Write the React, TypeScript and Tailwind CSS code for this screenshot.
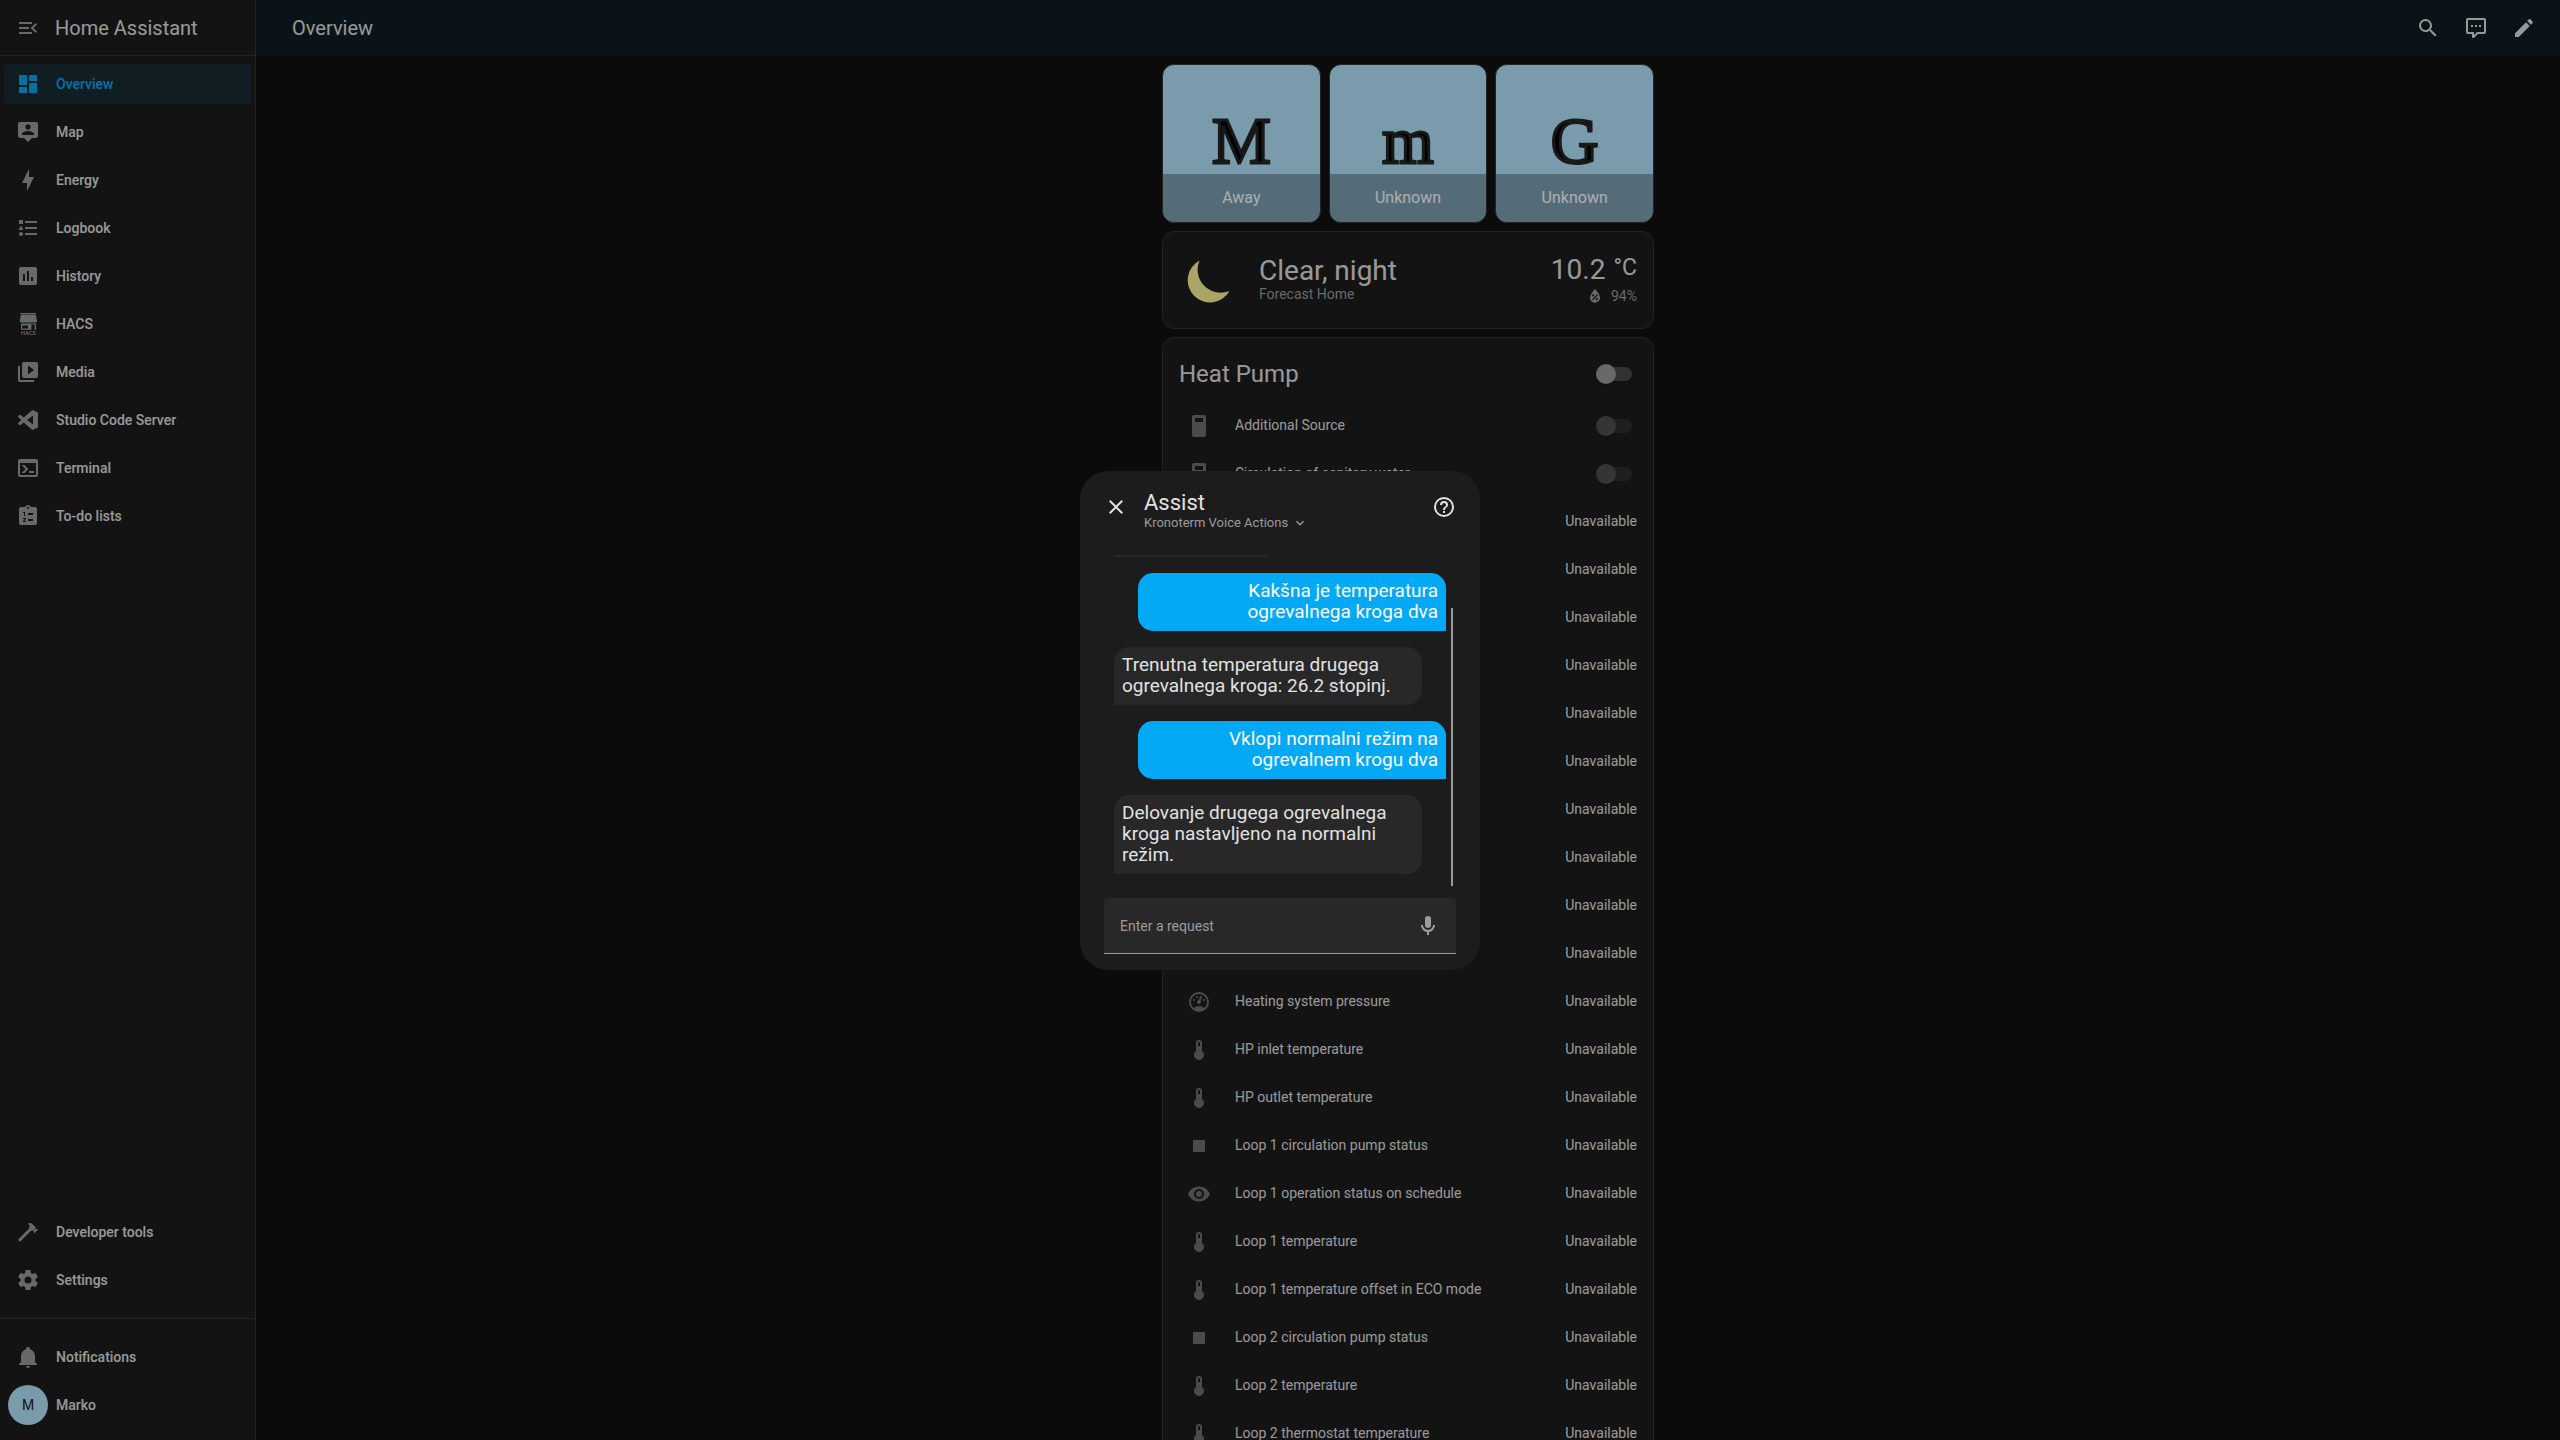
import React from "react";

const P = {
  menuOpen:
    "M21,15.61L19.59,17L14.58,12L19.59,7L21,8.39L17.44,12L21,15.61M3,6H16V8H3V6M3,13V11H13V13H3M3,18V16H16V18H3Z",
  dashboard: "M13,3V9H21V3M13,21H21V11H13M3,21H11V15H3M3,13H11V3H3V13Z",
  map: "M20,2H4A2,2 0 0,0 2,4V16A2,2 0 0,0 4,18H8L12,22L16,18H20A2,2 0 0,0 22,16V4A2,2 0 0,0 20,2M12,4.3C13.5,4.3 14.7,5.5 14.7,7C14.7,8.5 13.5,9.7 12,9.7C10.5,9.7 9.3,8.5 9.3,7C9.3,5.5 10.5,4.3 12,4.3M18,15H6V14.1C6,12.1 10,11 12,11C14,11 18,12.1 18,14.1V15Z",
  bolt: "M11 15H6L13 1V9H18L11 23V15Z",
  logbook:
    "M5,9.5L7.5,14H2.5L5,9.5M3,4H7V8H3V4M5,20A2,2 0 0,0 7,18A2,2 0 0,0 5,16A2,2 0 0,0 3,18A2,2 0 0,0 5,20M9,5V7H21V5H9M9,19H21V17H9V19M9,13H21V11H9V13Z",
  history:
    "M9 17H7V10H9V17M13 17H11V7H13V17M17 17H15V13H17V17M19 3H5C3.89 3 3 3.89 3 5V19C3 20.1 3.89 21 5 21H19C20.1 21 21 20.1 21 19V5C21 3.89 20.1 3 19 3Z",
  media:
    "M4,6H2V20A2,2 0 0,0 4,22H18V20H4V6M20,2H8A2,2 0 0,0 6,4V16A2,2 0 0,0 8,18H20A2,2 0 0,0 22,16V4A2,2 0 0,0 20,2M12,14.5V5.5L18,10L12,14.5Z",
  vscode:
    "M23.15 2.587L18.21.21a1.494 1.494 0 0 0-1.705.29l-9.46 8.63-4.12-3.128a.999.999 0 0 0-1.276.057L.327 7.261A1 1 0 0 0 .326 8.74L3.899 12 .326 15.26a1 1 0 0 0 .001 1.479L1.65 17.94a.999.999 0 0 0 1.276.057l4.12-3.128 9.46 8.63a1.492 1.492 0 0 0 1.704.29l4.942-2.377A1.5 1.5 0 0 0 24 20.06V3.939a1.5 1.5 0 0 0-.85-1.352zm-5.146 14.861L10.826 12l7.178-5.448v10.896z",
  terminal:
    "M20,19V7H4V19H20M20,3A2,2 0 0,1 22,5V19A2,2 0 0,1 20,21H4A2,2 0 0,1 2,19V5C2,3.89 2.9,3 4,3H20M13,17V15H18V17H13M9.58,13L5.57,9H8.4L11.7,12.3C12.09,12.69 12.09,13.33 11.7,13.72L8.42,17H5.59L9.58,13Z",
  todo: "M19 3H14.82C14.4 1.84 13.3 1 12 1S9.6 1.84 9.18 3H5C3.9 3 3 3.9 3 5V19C3 20.1 3.9 21 5 21H19C20.1 21 21 20.1 21 19V5C21 3.9 20.1 3 19 3M12 3C12.55 3 13 3.45 13 4S12.55 5 12 5 11 4.55 11 4 11.45 3 12 3M9 12H8V9H7V8H9V12M10 18H7V17.08L8.8 15H7V14H10V14.92L8.2 17H10V18M17 17H12V15H17V17M17 11H12V9H17V11Z",
  hammer:
    "M2 19.63L13.43 8.2L12.72 7.5L14.14 6.07L12 3.89C13.2 2.7 15.09 2.7 16.27 3.89L19.87 7.5L18.45 8.91H21.29L22 9.62L18.45 13.21L17.74 12.5V9.62L16.27 11.04L15.56 10.33L4.13 21.76L2 19.63Z",
  cog: "M12,15.5A3.5,3.5 0 0,1 8.5,12A3.5,3.5 0 0,1 12,8.5A3.5,3.5 0 0,1 15.5,12A3.5,3.5 0 0,1 12,15.5M19.43,12.97C19.47,12.65 19.5,12.33 19.5,12C19.5,11.67 19.47,11.34 19.43,11L21.54,9.37C21.73,9.22 21.78,8.95 21.66,8.73L19.66,5.27C19.54,5.05 19.27,4.96 19.05,5.05L16.56,6.05C16.04,5.66 15.5,5.32 14.87,5.07L14.5,2.42C14.46,2.18 14.25,2 14,2H10C9.75,2 9.54,2.18 9.5,2.42L9.13,5.07C8.5,5.32 7.96,5.66 7.44,6.05L4.95,5.05C4.73,4.96 4.46,5.05 4.34,5.27L2.34,8.73C2.21,8.95 2.27,9.22 2.46,9.37L4.57,11C4.53,11.34 4.5,11.67 4.5,12C4.5,12.33 4.53,12.65 4.57,12.97L2.46,14.63C2.27,14.78 2.21,15.05 2.34,15.27L4.34,18.73C4.46,18.95 4.73,19.03 4.95,18.95L7.44,17.94C7.96,18.34 8.5,18.68 9.13,18.93L9.5,21.58C9.54,21.82 9.75,22 10,22H14C14.25,22 14.46,21.82 14.5,21.58L14.87,18.93C15.5,18.67 16.04,18.34 16.56,17.94L19.05,18.95C19.27,19.03 19.54,18.95 19.66,18.73L21.66,15.27C21.78,15.05 21.73,14.78 21.54,14.63L19.43,12.97Z",
  bell: "M21,19V20H3V19L5,17V11C5,7.9 7.03,5.17 10,4.29C10,4.19 10,4.1 10,4A2,2 0 0,1 12,2A2,2 0 0,1 14,4C14,4.1 14,4.19 14,4.29C16.97,5.17 19,7.9 19,11V17L21,19M14,21A2,2 0 0,1 12,23A2,2 0 0,1 10,21",
  magnify:
    "M9.5,3A6.5,6.5 0 0,1 16,9.5C16,11.11 15.41,12.59 14.44,13.73L14.71,14H15.5L20.5,19L19,20.5L14,15.5V14.71L13.73,14.44C12.59,15.41 11.11,16 9.5,16A6.5,6.5 0 0,1 3,9.5A6.5,6.5 0 0,1 9.5,3M9.5,5C7,5 5,7 5,9.5C5,12 7,14 9.5,14C12,14 14,12 14,9.5C14,7 12,5 9.5,5Z",
  comment:
    "M9,22A1,1 0 0,1 8,21V18H4A2,2 0 0,1 2,16V4C2,2.89 2.9,2 4,2H20A2,2 0 0,1 22,4V16A2,2 0 0,1 20,18H13.9L10.2,21.71C10,21.9 9.75,22 9.5,22H9M10,16V19.08L13.08,16H20V4H4V16H10M17,11H15V9H17V11M13,11H11V9H13V11M9,11H7V9H9V11Z",
  pencil:
    "M20.71,7.04C21.1,6.65 21.1,6 20.71,5.63L18.37,3.29C18,2.9 17.35,2.9 16.96,3.29L15.12,5.12L18.87,8.87M3,17.25V21H6.75L17.81,9.93L14.06,6.18L3,17.25Z",
  humidity:
    "M12,3.25C12,3.25 6,10 6,14C6,17.32 8.69,20 12,20A6,6 0 0,0 18,14C18,10 12,3.25 12,3.25M14.47,9.97L15.53,11.03L9.53,17.03L8.47,15.97M9.75,10A1.25,1.25 0 0,1 11,11.25A1.25,1.25 0 0,1 9.75,12.5A1.25,1.25 0 0,1 8.5,11.25A1.25,1.25 0 0,1 9.75,10M14.25,14.5A1.25,1.25 0 0,1 15.5,15.75A1.25,1.25 0 0,1 14.25,17A1.25,1.25 0 0,1 13,15.75A1.25,1.25 0 0,1 14.25,14.5Z",
  gauge:
    "M12,2A10,10 0 0,0 2,12A10,10 0 0,0 12,22A10,10 0 0,0 22,12A10,10 0 0,0 12,2M12,4A8,8 0 0,1 20,12C20,14.4 19,16.5 17.3,18C15.9,16.7 14,16 12,16C10,16 8.2,16.7 6.7,18C5,16.5 4,14.4 4,12A8,8 0 0,1 12,4M14,5.89C13.62,5.9 13.26,6.15 13.1,6.54L11.81,9.77L11.71,10C11,10.13 10.41,10.6 10.14,11.26C9.73,12.29 10.23,13.45 11.26,13.86C12.29,14.27 13.45,13.77 13.86,12.74C14.12,12.08 14,11.32 13.57,10.76L13.67,10.5L14.96,7.29L14.97,7.26C15.17,6.75 14.92,6.17 14.41,5.96C14.28,5.91 14.15,5.89 14,5.89M10,6A1,1 0 0,0 9,7A1,1 0 0,0 10,8A1,1 0 0,0 11,7A1,1 0 0,0 10,6M7,9A1,1 0 0,0 6,10A1,1 0 0,0 7,11A1,1 0 0,0 8,10A1,1 0 0,0 7,9M17,9A1,1 0 0,0 16,10A1,1 0 0,0 17,11A1,1 0 0,0 18,10A1,1 0 0,0 17,9Z",
  thermometer:
    "M15 13V5A3 3 0 0 0 9 5V13A5 5 0 1 0 15 13M12 4A1 1 0 0 1 13 5V8H11V5A1 1 0 0 1 12 4Z",
  eye: "M12,9A3,3 0 0,0 9,12A3,3 0 0,0 12,15A3,3 0 0,0 15,12A3,3 0 0,0 12,9M12,17A5,5 0 0,1 7,12A5,5 0 0,1 12,7A5,5 0 0,1 17,12A5,5 0 0,1 12,17M12,4.5C7,4.5 2.73,7.61 1,12C2.73,16.39 7,19.5 12,19.5C17,19.5 21.27,16.39 23,12C21.27,7.61 17,4.5 12,4.5Z",
  stop: "M18,18H6V6H18V18Z",
  relay:
    "M17,1H7A2,2 0 0,0 5,3V21A2,2 0 0,0 7,23H17A2,2 0 0,0 19,21V3A2,2 0 0,0 17,1M16,8H8V4H16V8Z",
  close:
    "M19,6.41L17.59,5L12,10.59L6.41,5L5,6.41L10.59,12L5,17.59L6.41,19L12,13.41L17.59,19L19,17.59L13.41,12L19,6.41Z",
  help: "M11,18H13V16H11V18M12,2A10,10 0 0,0 2,12A10,10 0 0,0 12,22A10,10 0 0,0 22,12A10,10 0 0,0 12,2M12,20C7.59,20 4,16.41 4,12C4,7.59 7.59,4 12,4C16.41,4 20,7.59 20,12C20,16.41 16.41,20 12,20M12,6A4,4 0 0,0 8,10H10A2,2 0 0,1 12,8A2,2 0 0,1 14,10C14,12 11,11.75 11,15H13C13,12.75 16,12.5 16,10A4,4 0 0,0 12,6Z",
  chevron: "M7.41,8.58L12,13.17L16.59,8.58L18,10L12,16L6,10L7.41,8.58Z",
  mic: "M12,2A3,3 0 0,1 15,5V11A3,3 0 0,1 12,14A3,3 0 0,1 9,11V5A3,3 0 0,1 12,2M19,11C19,14.53 16.39,17.44 13,17.93V21H11V17.93C7.61,17.44 5,14.53 5,11H7A5,5 0 0,0 12,16A5,5 0 0,0 17,11H19Z",
};

function Icon({
  d,
  className = "size-6",
  viewBox = "0 0 24 24",
}: {
  d: string;
  className?: string;
  viewBox?: string;
}) {
  return (
    <svg viewBox={viewBox} className={className} fill="currentColor" aria-hidden="true">
      <path d={d} />
    </svg>
  );
}

function HacsIcon() {
  return (
    <svg viewBox="0 0 24 24" className="size-6" fill="currentColor" aria-hidden="true">
      <path d="M4.5 1H20V2.4H4.5ZM4.8 3H19.8L21 8.5V9.8L20 10.6H4.6L3.8 9.8V8.5Z" />
      <path d="M5 11.4H20V17.8H18.6V12.6H15.4V17.8H5ZM6.2 13.6V16.6H12V13.6Z" fillRule="evenodd" />
      <text x="12.4" y="23.4" fontSize="5.6" textAnchor="middle" fontFamily="Roboto, sans-serif" fontWeight="500">
        HACS
      </text>
    </svg>
  );
}

const NAV: { label: string; icon: React.ReactNode; active?: boolean }[] = [
  { label: "Overview", icon: <Icon d={P.dashboard} />, active: true },
  { label: "Map", icon: <Icon d={P.map} /> },
  { label: "Energy", icon: <Icon d={P.bolt} /> },
  { label: "Logbook", icon: <Icon d={P.logbook} /> },
  { label: "History", icon: <Icon d={P.history} /> },
  { label: "HACS", icon: <HacsIcon /> },
  { label: "Media", icon: <Icon d={P.media} /> },
  { label: "Studio Code Server", icon: <Icon d={P.vscode} viewBox="-2.4 -2.4 28.8 28.8" /> },
  { label: "Terminal", icon: <Icon d={P.terminal} /> },
  { label: "To-do lists", icon: <Icon d={P.todo} /> },
];

function NavItem({ label, icon, active }: { label: string; icon: React.ReactNode; active?: boolean }) {
  return (
    <a
      href="#"
      className={
        active
          ? "mx-1 flex h-10 items-center gap-4 rounded bg-[#192d36] px-3 text-sm font-medium text-[#03a9f4]"
          : "mx-1 flex h-10 items-center gap-4 rounded px-3 text-sm font-medium text-[#e1e1e1]"
      }
    >
      <span className={active ? "text-[#03a9f4]" : "text-[#9b9b9b]"}>{icon}</span>
      {label}
    </a>
  );
}

function Sidebar() {
  return (
    <aside className="flex w-64 shrink-0 flex-col border-r border-[#343434] bg-[#1c1c1c]">
      <div className="flex h-14 shrink-0 items-center gap-[3px] border-b border-[#343434] px-1">
        <button type="button" aria-label="Sidebar toggle" className="flex size-12 items-center justify-center text-[#9b9b9b]">
          <Icon d={P.menuOpen} />
        </button>
        <span className="text-xl text-[#e1e1e1]">Home Assistant</span>
      </div>
      <nav className="flex flex-1 flex-col gap-2 pt-2">
        {NAV.map((n) => (
          <NavItem key={n.label} {...n} />
        ))}
        <div className="flex-1" />
        <NavItem label="Developer tools" icon={<Icon d={P.hammer} />} />
        <NavItem label="Settings" icon={<Icon d={P.cog} />} />
      </nav>
      <div className="mt-[18px] flex flex-col gap-2 border-t border-[#343434] pt-[18px] pb-[15px]">
        <NavItem label="Notifications" icon={<Icon d={P.bell} />} />
        <a href="#" className="mx-2 flex h-10 items-center gap-2 text-sm font-medium text-[#e1e1e1]">
          <span className="flex size-10 items-center justify-center rounded-full bg-[#b3e5fc] font-normal text-[#212121]">
            M
          </span>
          Marko
        </a>
      </div>
    </aside>
  );
}

function Person({ letter, state }: { letter: string; state: string }) {
  return (
    <div className="relative flex aspect-square flex-1 items-center justify-center overflow-hidden rounded-xl border border-[#343434] bg-[#b3e5fc] pb-1">
      <span className="font-['Liberation_Serif',serif] text-[66px] leading-none text-black [-webkit-text-stroke:3px_#262626]">
        {letter}
      </span>
      <div className="absolute inset-x-0 bottom-0 flex h-12 items-center justify-center bg-black/30 text-base text-white">
        {state}
      </div>
    </div>
  );
}

function Weather() {
  return (
    <section className="flex items-center gap-4 rounded-xl border border-[#343434] bg-[#1c1c1c] p-4">
      <svg viewBox="0 0 64 64" className="size-16 shrink-0" aria-hidden="true">
        <path d="M20.5 12.5A22.3 22.3 0 1 0 50.5 43A23.1 23.1 0 0 1 20.5 12.5Z" fill="#fbf497" />
      </svg>
      <div className="flex-1 pb-1">
        <div className="text-[28px] leading-8 text-[#e1e1e1]">Clear, night</div>
        <div className="text-sm leading-[14px] text-[#9b9b9b]">Forecast Home</div>
      </div>
      <div className="text-right">
        <div className="flex justify-end gap-2 text-[#e1e1e1]">
          <span className="text-[28px] leading-8">10.2</span>
          <span className="text-[23px] leading-7">°C</span>
        </div>
        <div className="flex items-center justify-end gap-1.5 text-sm leading-[18px] text-[#9b9b9b]">
          <Icon d={P.humidity} className="size-5" />
          94%
        </div>
      </div>
    </section>
  );
}

function Toggle({ label, disabled }: { label: string; disabled?: boolean }) {
  return (
    <input
      type="checkbox"
      role="switch"
      aria-label={label}
      disabled={disabled}
      className="mr-[5px] flex h-3.5 w-9 appearance-none items-center rounded-full bg-[#4b4b4b] before:size-5 before:shrink-0 before:rounded-full before:bg-[#9b9b9b] before:shadow disabled:opacity-40"
    />
  );
}

const ENTITIES: { name: string; icon: string; toggle?: boolean }[] = [
  { name: "Additional Source", icon: P.relay, toggle: true },
  { name: "Circulation of sanitary water", icon: P.relay, toggle: true },
  ...Array.from({ length: 10 }, () => ({ name: "", icon: P.thermometer })),
  { name: "Heating system pressure", icon: P.gauge },
  { name: "HP inlet temperature", icon: P.thermometer },
  { name: "HP outlet temperature", icon: P.thermometer },
  { name: "Loop 1 circulation pump status", icon: P.stop },
  { name: "Loop 1 operation status on schedule", icon: P.eye },
  { name: "Loop 1 temperature", icon: P.thermometer },
  { name: "Loop 1 temperature offset in ECO mode", icon: P.thermometer },
  { name: "Loop 2 circulation pump status", icon: P.stop },
  { name: "Loop 2 temperature", icon: P.thermometer },
  { name: "Loop 2 thermostat temperature", icon: P.thermometer },
];

function HeatPump() {
  return (
    <section className="rounded-xl border border-[#343434] bg-[#1c1c1c] px-4 pb-4">
      <div className="flex items-center justify-between pt-3 pb-2">
        <h2 className="text-2xl leading-[48px] text-[#e1e1e1]">Heat Pump</h2>
        <Toggle label="Heat Pump" />
      </div>
      <ul className="flex flex-col gap-2">
        {ENTITIES.map((e, i) => (
          <li key={i} className="flex h-10 items-center text-sm text-[#e1e1e1]">
            <span className="mr-4 flex size-10 items-center justify-center text-[#6f6f6f]">
              <Icon d={e.icon} />
            </span>
            <span className="flex-1 pb-0.5">{e.name}</span>
            {e.toggle ? <Toggle label={e.name} disabled /> : <span className="pb-0.5">Unavailable</span>}
          </li>
        ))}
      </ul>
    </section>
  );
}

function UserBubble({ children }: { children: React.ReactNode }) {
  return (
    <div className="ml-6 shrink-0 rounded-[15px] rounded-br-none bg-[#03a9f4] px-2 pt-[7px] pb-[9px] text-right text-[19px] leading-[21px] text-white">
      {children}
    </div>
  );
}

function BotBubble({ children }: { children: React.ReactNode }) {
  return (
    <div className="mr-6 shrink-0 rounded-[15px] rounded-bl-none bg-[#282828] px-2 pt-[7px] pb-[9px] text-[19px] leading-[21px] text-[#e1e1e1]">
      {children}
    </div>
  );
}

function AssistDialog() {
  return (
    <div className="fixed inset-0 flex items-center justify-center bg-black/32 pt-px">
      <div role="dialog" aria-label="Assist" className="w-[400px] rounded-[28px] bg-[#1c1c1c] pb-4 text-[#e1e1e1]">
        <header className="flex items-center gap-1 px-3 pt-3 pb-6">
          <button type="button" aria-label="Close" className="flex size-12 items-center justify-center">
            <Icon d={P.close} />
          </button>
          <div className="flex-1 pt-2">
            <h1 className="text-[22px] leading-6">Assist</h1>
            <button type="button" className="flex items-center gap-1 text-[13px] leading-4 text-[#9b9b9b]">
              Kronoterm Voice Actions
              <Icon d={P.chevron} className="size-4" />
            </button>
          </div>
          <button type="button" aria-label="Help" className="flex size-12 items-center justify-center">
            <Icon d={P.help} />
          </button>
        </header>
        <div className="relative mx-6 flex h-[331px] flex-col justify-end gap-4 overflow-hidden px-2.5 pb-3">
          <div className="h-10 w-[164px] shrink-0 rounded-[15px] rounded-bl-none bg-[#282828]" />
          <UserBubble>
            Kakšna je temperatura
            <br />
            ogrevalnega kroga dva
          </UserBubble>
          <BotBubble>
            Trenutna temperatura drugega
            <br />
            ogrevalnega kroga: 26.2 stopinj.
          </BotBubble>
          <UserBubble>
            Vklopi normalni režim na
            <br />
            ogrevalnem krogu dva
          </UserBubble>
          <BotBubble>
            Delovanje drugega ogrevalnega
            <br />
            kroga nastavljeno na normalni
            <br />
            režim.
          </BotBubble>
          <div className="absolute right-[3px] bottom-0 h-[278px] w-0.5 bg-[#9b9b9b]" />
        </div>
        <label className="mx-6 mt-3 flex h-14 items-center rounded-t border-b border-[#9b9b9b] bg-[#282828] pr-1 pl-4">
          <input
            type="text"
            aria-label="Enter a request"
            placeholder="Enter a request"
            className="min-w-0 flex-1 bg-transparent text-sm outline-none placeholder:text-[#9b9b9b]"
          />
          <button type="button" aria-label="Start listening" className="flex size-12 items-center justify-center text-[#9b9b9b]">
            <Icon d={P.mic} />
          </button>
        </label>
      </div>
    </div>
  );
}

export default function App() {
  return (
    <div className="flex h-screen overflow-hidden bg-[#111111] font-[Roboto,sans-serif]">
      <Sidebar />
      <div className="flex min-w-0 flex-1 flex-col">
        <header className="flex h-14 shrink-0 items-center justify-between bg-[#101e24] pr-3 pl-9 text-[#e1e1e1]">
          <h1 className="text-xl">Overview</h1>
          <div className="flex">
            <button type="button" aria-label="Search" className="flex size-12 items-center justify-center">
              <Icon d={P.magnify} />
            </button>
            <button type="button" aria-label="Assist" className="flex size-12 items-center justify-center">
              <Icon d={P.comment} />
            </button>
            <button type="button" aria-label="Edit dashboard" className="flex size-12 items-center justify-center">
              <Icon d={P.pencil} />
            </button>
          </div>
        </header>
        <main className="min-h-0 flex-1 overflow-hidden">
          <div className="mx-auto flex max-w-[500px] flex-col gap-2 px-1 pt-2">
            <div className="flex gap-2">
              <Person letter="M" state="Away" />
              <Person letter="m" state="Unknown" />
              <Person letter="G" state="Unknown" />
            </div>
            <Weather />
            <HeatPump />
          </div>
        </main>
      </div>
      <AssistDialog />
    </div>
  );
}
